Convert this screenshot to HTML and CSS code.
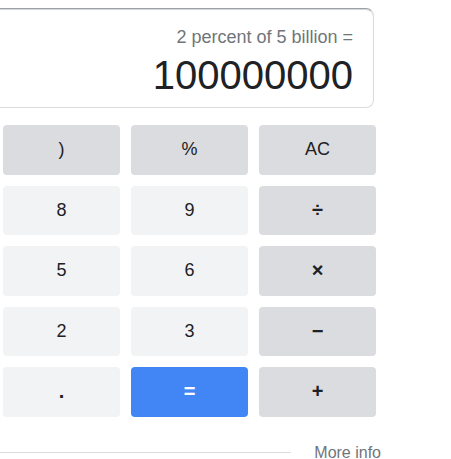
FILE: index.html
```html
<!DOCTYPE html>
<html lang="en">
  <head>
    <meta charset="UTF-8" />
    <meta name="viewport" content="width=device-width, initial-scale=1.0" />
    <title>Calculator</title>
    <link rel="stylesheet" href="styles.css">
  </head>
  <body>
    <div class="calc">
      <div class="display">
        <div class="expr">2 percent of 5 billion =</div>
        <div class="result">100000000</div>
      </div>

      <div class="keys">
        <button class="key op">)</button>
        <button class="key op">%</button>
        <button class="key op">AC</button>

        <button class="key">8</button>
        <button class="key">9</button>
        <button class="key op sym">&divide;</button>

        <button class="key">5</button>
        <button class="key">6</button>
        <button class="key op sym">&times;</button>

        <button class="key">2</button>
        <button class="key">3</button>
        <button class="key op sym">&minus;</button>

        <button class="key sym">.</button>
        <button class="key equals sym">=</button>
        <button class="key op sym">+</button>
      </div>

      <div class="footer">
        <span class="rule"></span>
        <a href="#" class="more">More info</a>
      </div>
    </div>
  </body>
</html>
```

FILE: styles.css
```css
body {
  font-family: "Liberation Sans", Arial, sans-serif;
  margin: 0;
  padding: 0;
  background-color: #fff;
  color: #202124;
  overflow: hidden;
}

.calc {
  width: 373px;
  padding: 8px 0 0 3px;
}

/* Display */
.display {
  height: 100px;
  box-sizing: border-box;
  margin: 0 2px 0 -40px;
  padding: 18px 20px 0 0;
  border: 1px solid #dadce0;
  border-top-color: #9aa0a6;
  border-radius: 8px;
  box-shadow: inset 0 1px 1px #d5d5d5;
  text-align: right;
}

.expr {
  font-size: 18px;
  line-height: 20px;
  color: #70757a;
}

.result {
  margin-top: 6px;
  font-size: 40px;
  line-height: 44px;
  color: #202124;
}

/* Keys */
.keys {
  display: grid;
  grid-template-columns: repeat(3, 117px);
  grid-auto-rows: 49.5px;
  gap: 11px;
  margin-top: 17px;
}

.key {
  display: flex;
  align-items: center;
  justify-content: center;
  border: none;
  border-radius: 4px;
  background-color: #f1f3f4;
  color: #202124;
  font-family: "Liberation Sans", Arial, sans-serif;
  font-size: 18px;
  padding: 0;
  cursor: pointer;
}

.key.op {
  background-color: #dadce0;
}

.key.sym {
  font-size: 20px;
  font-weight: bold;
}

.key.equals {
  background-color: #4285f4;
  color: #fff;
}

/* Footer */
.footer {
  display: flex;
  align-items: center;
  gap: 23px;
  margin: 26px -5px 0 -40px;
  height: 20px;
}

.rule {
  flex: 1;
  height: 1px;
  background-color: #dadce0;
}

.more {
  font-size: 16px;
  color: #70757a;
  text-decoration: none;
}
```
